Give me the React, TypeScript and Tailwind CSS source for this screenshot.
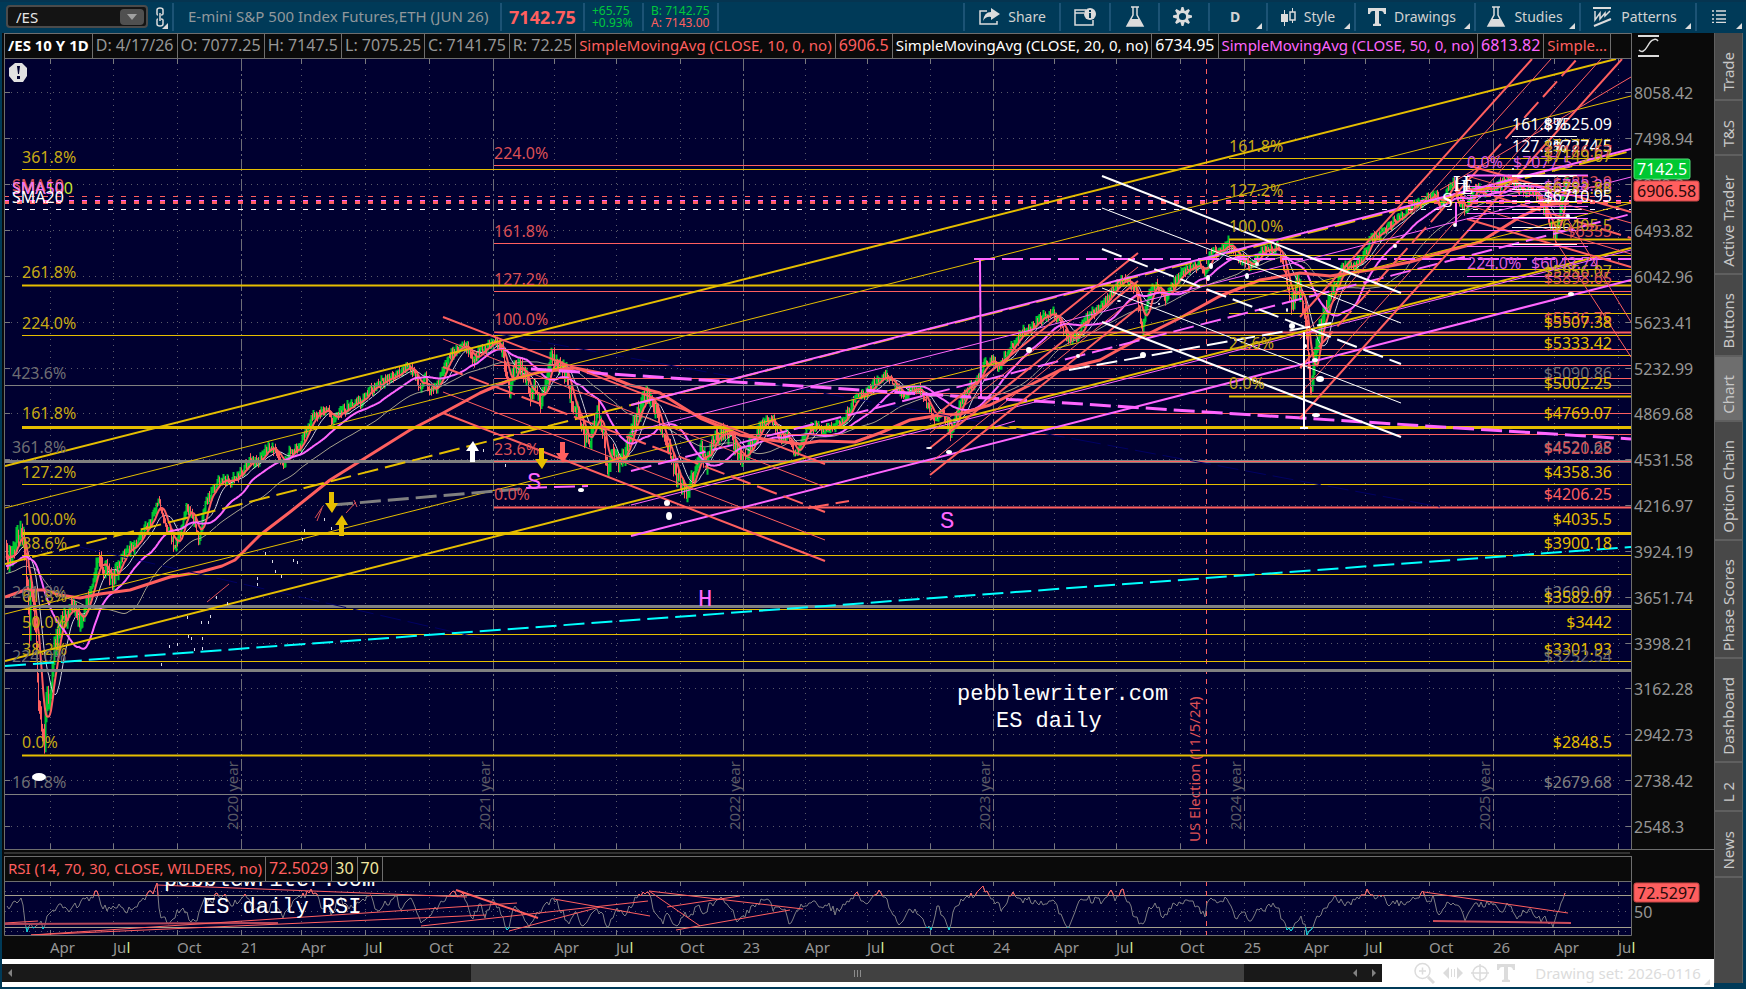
import { ReactNode } from 'react'

type Point = [number, number]
type Level = [number, number, number]
type Segment = [number, number, number, number, string, number, boolean?]
type Label = [number, number, string, string]

const YELLOW = '#e6be00'
const RED = '#ff5f5f'
const MAGENTA = '#ff66ff'
const GRAY = '#808080'
const GREEN = '#00c832'
const DIM_YELLOW = '#c8aa14'
const DIM_RED = '#dc5055'

const gridX = [50, 113, 177, 301, 365, 429, 554, 616, 680, 805, 867, 930, 1054, 1116, 1180, 1304, 1365, 1429, 1554, 1618]
const years: [number, string][] = [[241, '2020 year'], [493, '2021 year'], [743, '2022 year'], [993, '2023 year'], [1244, '2024 year'], [1493, '2025 year']]

const priceAxis: [number, string][] = [
  [92, '8058.42'], [138, '7498.94'], [184, '6978.3'], [230, '6493.82'], [276, '6042.96'], [322, '5623.41'],
  [368, '5232.99'], [413, '4869.68'], [459, '4531.58'], [505, '4216.97'], [551, '3924.19'], [597, '3651.74'],
  [643, '3398.21'], [688, '3162.28'], [734, '2942.73'], [780, '2738.42'], [826, '2548.3'],
]

const dates: [number, string][] = [
  [50, 'Apr'], [113, 'Jul'], [177, 'Oct'], [241, '21'], [301, 'Apr'], [365, 'Jul'], [429, 'Oct'], [493, '22'],
  [554, 'Apr'], [616, 'Jul'], [680, 'Oct'], [743, '23'], [805, 'Apr'], [867, 'Jul'], [930, 'Oct'], [993, '24'],
  [1054, 'Apr'], [1116, 'Jul'], [1180, 'Oct'], [1244, '25'], [1304, 'Apr'], [1365, 'Jul'], [1429, 'Oct'],
  [1493, '26'], [1554, 'Apr'], [1618, 'Jul'],
]

// Fibonacci levels: x start, y, weight (1 thin, 2 soft, 3 bold)
const yellowLevels: Level[] = [
  [22, 169, 1], [22, 285, 2], [22, 335, 1], [22, 427, 3], [22, 484, 1], [22, 533, 3], [22, 555, 1], [22, 574, 1],
  [22, 609, 1], [22, 634, 1], [22, 661, 1], [22, 755, 2],
  [1229, 158, 1], [1229, 202, 1], [1229, 239, 2], [1229, 255, 1], [1229, 269, 1], [1229, 281, 1], [1229, 294, 1],
  [1229, 313, 1], [1229, 355, 1], [1229, 396, 2],
]
const grayLevels: Level[] = [[5, 385, 1], [5, 461, 3], [5, 606, 3], [5, 670, 3], [5, 794, 1]]
const redLevels: Level[] = [
  [494, 165, 1], [494, 243, 1], [494, 291, 1], [494, 332, 2], [494, 349, 1], [494, 365, 1], [494, 378, 1],
  [494, 393, 1], [494, 413, 1], [494, 434, 1], [494, 461, 1], [494, 507, 2],
]

const channels: Segment[] = [
  [80, 547, 480, 638, '#000064', 1, true],
  [493, 333, 1080, 440, '#000064', 1, true],
  [1080, 440, 1440, 507, '#000064', 1, true],
  [5, 466, 1616, 59, YELLOW, 2],
  [5, 508, 1631, 96, YELLOW, 1],
  [5, 564, 1631, 151, YELLOW, 2, true],
  [5, 614, 1631, 203, YELLOW, 1],
  [5, 661, 1631, 248, YELLOW, 2],
  [5, 666, 1631, 547, '#00ffff', 2, true],
  [631, 405, 1631, 149, MAGENTA, 2],
  [631, 432, 1631, 177, MAGENTA, 1],
  [631, 471, 1631, 214, MAGENTA, 2, true],
  [631, 505, 1631, 250, MAGENTA, 1],
  [631, 536, 1631, 280, MAGENTA, 2],
  [531, 369, 1631, 439, MAGENTA, 3, true],
  [974, 259, 1631, 259, MAGENTA, 2, true],
  [980, 260, 981, 398, MAGENTA, 2],
  [526, 488, 588, 486, MAGENTA, 2, true],
  [995, 427, 1015, 421, MAGENTA, 1],
  [332, 505, 520, 489, GRAY, 3, true],
  [443, 317, 825, 464, RED, 2],
  [443, 339, 825, 487, RED, 1],
  [443, 367, 825, 512, RED, 2, true],
  [443, 392, 825, 540, RED, 1],
  [443, 413, 825, 561, RED, 2],
  [808, 508, 849, 501, RED, 2, true],
  [930, 420, 1138, 253, RED, 2],
  [930, 433, 1138, 267, RED, 1],
  [930, 448, 1138, 281, RED, 2],
  [930, 463, 1138, 295, RED, 1],
  [930, 475, 1138, 308, RED, 2],
  [1300, 317, 1532, 59, RED, 2],
  [1300, 339, 1551, 59, RED, 1],
  [1300, 368, 1577, 59, RED, 2, true],
  [1300, 394, 1601, 59, RED, 1],
  [1300, 418, 1622, 59, RED, 2],
  [1440, 190, 1631, 77, RED, 1],
  [1467, 165, 1631, 212, RED, 2],
  [1467, 176, 1631, 223, RED, 1],
  [1467, 188, 1631, 238, RED, 2, true],
  [1467, 205, 1631, 254, RED, 1],
  [1467, 219, 1631, 267, RED, 2],
  [1553, 237, 1631, 357, RED, 1],
  [1548, 187, 1631, 322, RED, 1],
  [1102, 176, 1401, 293, '#fff', 2],
  [1102, 208, 1401, 323, '#fff', 1],
  [1102, 249, 1401, 364, '#fff', 2, true],
  [1102, 288, 1401, 403, '#fff', 1],
  [1102, 322, 1401, 437, '#fff', 2],
  [1069, 370, 1331, 323, '#fff', 2, true],
  [1304, 332, 1304, 428, '#fff', 2],
  [1300, 428, 1308, 428, '#fff', 2],
  [207, 602, 229, 584, DIM_RED, 1],
  [315, 518, 323, 506, DIM_RED, 1],
  [317, 521, 322, 508, DIM_RED, 1],
  [346, 513, 356, 502, DIM_RED, 1],
  [354, 500, 357, 507, DIM_RED, 1],
]

const price: Point[] = [
  [-110, 590], [-60, 580], [-20, 568], [6, 553], [8, 560], [15, 540], [22, 534], [24, 545], [27, 590], [29, 630], [30, 590],
  [33, 600], [36, 650], [38, 700], [41, 725], [44, 745], [46, 705], [50, 690], [53, 660], [56, 640], [62, 618], [68, 620],
  [70, 605], [76, 612], [81, 625], [86, 600], [90, 590], [97, 560], [101, 565], [106, 570], [112, 580], [118, 565],
  [125, 553], [130, 548], [136, 546], [144, 530], [150, 522], [158, 500], [163, 520], [170, 535], [174, 548], [180, 532],
  [186, 508], [192, 515], [198, 540], [203, 515], [206, 500], [212, 490], [220, 480], [228, 481], [235, 478], [243, 470],
  [250, 460], [258, 463], [265, 450], [271, 448], [278, 455], [283, 467], [290, 450], [298, 450], [306, 430], [312, 416],
  [320, 412], [328, 409], [332, 422], [338, 415], [345, 410], [352, 404], [360, 402], [366, 392], [374, 387], [382, 382],
  [390, 377], [400, 372], [408, 367], [414, 372], [420, 390], [425, 378], [430, 393], [437, 385], [445, 365], [452, 352],
  [458, 348], [467, 347], [473, 362], [480, 350], [487, 347], [492, 339], [500, 347], [505, 365], [509, 388], [514, 370],
  [520, 365], [526, 378], [530, 400], [536, 388], [540, 410], [545, 380], [551, 357], [558, 364], [566, 375], [572, 405],
  [578, 410], [584, 440], [590, 440], [597, 410], [602, 430], [607, 472], [612, 450], [618, 463], [624, 455], [630, 435],
  [637, 412], [645, 397], [650, 396], [656, 415], [662, 435], [668, 445], [674, 470], [680, 485], [687, 492], [694, 472],
  [701, 452], [706, 465], [712, 440], [720, 435], [730, 433], [735, 450], [741, 460], [750, 445], [758, 432], [765, 420],
  [773, 422], [781, 440], [788, 435], [793, 455], [800, 445], [806, 430], [815, 427], [825, 430], [835, 425], [842, 421],
  [850, 408], [857, 394], [865, 395], [875, 382], [885, 375], [893, 382], [903, 398], [912, 388], [920, 390], [927, 405],
  [935, 420], [942, 408], [950, 434], [956, 415], [965, 392], [975, 382], [984, 364], [990, 360], [998, 366], [1010, 348],
  [1022, 333], [1034, 324], [1045, 315], [1052, 312], [1060, 324], [1068, 340], [1078, 335], [1086, 317], [1095, 312],
  [1105, 300], [1115, 287], [1126, 279], [1135, 290], [1142, 328], [1148, 295], [1156, 284], [1165, 300], [1172, 285],
  [1180, 274], [1190, 267], [1200, 264], [1205, 275], [1210, 252], [1220, 250], [1228, 243], [1236, 255], [1245, 262],
  [1252, 268], [1260, 250], [1270, 250], [1277, 245], [1284, 270], [1290, 300], [1298, 285], [1305, 320], [1310, 390],
  [1316, 345], [1320, 330], [1328, 300], [1335, 285], [1342, 268], [1352, 265], [1362, 260], [1370, 237], [1380, 234],
  [1390, 224], [1400, 217], [1412, 207], [1425, 200], [1437, 197], [1440, 208], [1448, 187], [1453, 182], [1458, 200],
  [1466, 210], [1472, 190], [1485, 190], [1500, 184], [1510, 180], [1520, 190], [1530, 190], [1540, 200], [1550, 225],
  [1555, 238], [1560, 210], [1565, 185], [1567, 174],
]

const sma200: Point[] = [
  [5, 597], [25, 590], [45, 590], [60, 595], [80, 598], [100, 594], [130, 590], [170, 577], [200, 572], [222, 566],
  [235, 560], [260, 535], [290, 512], [330, 480], [370, 455], [410, 430], [443, 413], [480, 393], [510, 380], [540, 372],
  [575, 368], [600, 373], [630, 385], [660, 393], [700, 418], [740, 435], [770, 440], [800, 444], [820, 441], [855, 442],
  [880, 433], [910, 420], [940, 415], [960, 414], [990, 405], [1020, 390], [1060, 370], [1100, 360], [1140, 338],
  [1180, 318], [1220, 296], [1260, 280], [1300, 273], [1330, 276], [1370, 270], [1410, 262], [1440, 253], [1480, 242],
  [1520, 217], [1545, 205], [1567, 203],
]

const rsi: Point[] = [
  [7, 908], [12, 902], [20, 899], [23, 905], [25, 925], [27, 935], [30, 922], [34, 932], [38, 920], [44, 928], [48, 912],
  [55, 908], [62, 904], [68, 910], [78, 905], [85, 900], [92, 896], [98, 892], [100, 908], [110, 908], [118, 905],
  [125, 911], [135, 905], [145, 898], [152, 892], [157, 886], [160, 915], [165, 920], [172, 922], [178, 911], [185, 910],
  [190, 920], [197, 922], [203, 900], [210, 903], [216, 896], [225, 897], [233, 905], [240, 900], [246, 896], [254, 912],
  [260, 905], [268, 910], [275, 900], [283, 918], [290, 905], [300, 898], [312, 891], [317, 897], [323, 910], [328, 903],
  [332, 917], [338, 898], [345, 903], [350, 907], [360, 900], [370, 896], [378, 912], [385, 904], [398, 896], [400, 912],
  [408, 899], [415, 905], [421, 925], [430, 918], [438, 905], [445, 899], [453, 890], [458, 895], [466, 897], [472, 918],
  [480, 905], [485, 916], [493, 902], [500, 912], [508, 930], [515, 905], [520, 914], [528, 925], [535, 915], [542, 910],
  [550, 902], [556, 900], [562, 912], [568, 922], [575, 913], [583, 926], [590, 915], [600, 910], [608, 926], [618, 910],
  [625, 915], [635, 900], [648, 891], [655, 912], [662, 923], [668, 912], [676, 929], [684, 912], [690, 917], [697, 905],
  [703, 914], [710, 904], [722, 900], [730, 908], [737, 919], [745, 915], [755, 905], [765, 899], [775, 910], [782, 905],
  [790, 924], [797, 910], [805, 903], [815, 901], [822, 908], [828, 904], [835, 912], [845, 903], [857, 892], [863, 903],
  [870, 902], [878, 892], [885, 897], [892, 912], [900, 925], [908, 908], [915, 912], [923, 922], [931, 929], [938, 905],
  [944, 920], [950, 928], [955, 905], [965, 897], [975, 896], [984, 888], [990, 896], [998, 905], [1003, 910], [1010, 893],
  [1018, 900], [1028, 900], [1040, 903], [1052, 900], [1060, 913], [1068, 926], [1077, 905], [1085, 898], [1093, 901],
  [1105, 900], [1110, 892], [1115, 898], [1123, 890], [1130, 908], [1137, 918], [1142, 926], [1148, 910], [1155, 903],
  [1164, 918], [1172, 905], [1180, 902], [1190, 898], [1198, 908], [1205, 915], [1209, 897], [1215, 903], [1225, 898],
  [1232, 905], [1236, 922], [1243, 910], [1250, 920], [1258, 908], [1265, 912], [1272, 903], [1278, 908], [1283, 922],
  [1290, 930], [1297, 920], [1302, 918], [1308, 934], [1315, 920], [1325, 908], [1335, 897], [1345, 905], [1355, 900],
  [1368, 891], [1375, 900], [1383, 892], [1388, 910], [1395, 902], [1405, 905], [1415, 897], [1424, 892], [1428, 903],
  [1433, 896], [1438, 920], [1445, 905], [1453, 902], [1460, 910], [1466, 922], [1472, 907], [1480, 905], [1490, 903],
  [1500, 910], [1510, 905], [1517, 918], [1530, 908], [1540, 919], [1548, 920], [1553, 928], [1558, 910], [1565, 893],
]

const rsiTrends: Segment[] = [
  [5, 923, 38, 921, RED, 1], [5, 924, 278, 923, '#b4465a', 2], [31, 935, 486, 915, RED, 1], [31, 935, 517, 903, RED, 1],
  [157, 885, 467, 897, RED, 1], [456, 890, 538, 918, RED, 2], [421, 926, 648, 901, RED, 1], [509, 931, 600, 907, RED, 1],
  [554, 899, 650, 916, RED, 1], [649, 891, 803, 909, RED, 1], [649, 891, 700, 926, RED, 1], [667, 907, 740, 896, RED, 1],
  [676, 930, 790, 910, RED, 1], [1424, 892, 1568, 913, RED, 1], [1433, 921, 1571, 923, '#c84b5a', 2],
]

const leftLabels: Label[] = [
  [22, 163, '361.8%', DIM_YELLOW], [22, 278, '261.8%', DIM_YELLOW], [22, 329, '224.0%', DIM_YELLOW],
  [22, 419, '161.8%', DIM_YELLOW], [22, 478, '127.2%', DIM_YELLOW], [22, 525, '100.0%', DIM_YELLOW],
  [22, 549, '88.6%', DIM_YELLOW], [22, 602, '61.8%', DIM_YELLOW], [22, 628, '50.0%', DIM_YELLOW],
  [22, 655, '38.2%', DIM_YELLOW], [22, 748, '0.0%', DIM_YELLOW],
  [12, 379, '423.6%', '#6e6e73'], [12, 453, '361.8%', '#6e6e73'], [12, 598, '261.8%', '#6e6e73'],
  [12, 662, '224.0%', '#6e6e73'], [12, 788, '161.8%', '#6e6e73'],
  [494, 159, '224.0%', DIM_RED], [494, 237, '161.8%', DIM_RED], [494, 285, '127.2%', DIM_RED],
  [494, 325, '100.0%', DIM_RED], [494, 455, '23.6%', DIM_RED], [494, 500, '0.0%', DIM_RED],
  [1229, 152, '161.8%', DIM_YELLOW], [1229, 196, '127.2%', DIM_YELLOW], [1229, 232, '100.0%', DIM_YELLOW],
  [1229, 349, '23.6%', DIM_YELLOW], [1229, 389, '0.0%', DIM_YELLOW],
  [1467, 168, '0.0%', '#dc5adc'], [1513, 168, '$7077.5', '#dc5adc'],
  [1467, 269, '224.0%', '#dc5adc'], [1531, 269, '$6043.74', '#dc5adc'],
  [1512, 130, '161.8%', '#fff'], [1512, 152, '127.2%', '#fff'],
  [12, 191, 'SMA10', DIM_RED], [12, 194, 'SMA100', '#c8e632'], [12, 194, 'SMA50', MAGENTA], [12, 203, 'SMA20', '#fff'],
]

const rightLabels: [number, string, string][] = [
  [130, '$7525.09', '#fff'], [151, '$7277.75', DIM_YELLOW], [152, '$7274.5', '#fff'], [157, '$7186.67', DIM_RED],
  [162, '$7149.67', DIM_YELLOW], [188, '$6853.9', DIM_RED], [191, '$6798.28', '#dc5adc'], [194, '$6782.88', DIM_YELLOW],
  [202, '$6710.95', '#fff'], [231, '$6405.5', DIM_YELLOW], [237, '$6355', DIM_RED], [277, '$5956.07', DIM_YELLOW],
  [284, '$5898.65', DIM_RED], [324, '$5536.75', DIM_RED], [328, '$5507.38', YELLOW], [349, '$5333.42', YELLOW],
  [379, '$5090.86', '#6e6e73'], [389, '$5002.25', YELLOW], [419, '$4769.07', YELLOW], [453, '$4521.68', GRAY],
  [454, '$4520.25', DIM_RED], [478, '$4358.36', YELLOW], [500, '$4206.25', RED], [525, '$4035.5', YELLOW],
  [549, '$3900.18', YELLOW], [598, '$3600.68', GRAY], [603, '$3582.07', YELLOW], [628, '$3442', YELLOW],
  [655, '$3301.93', YELLOW], [662, '$3252.54', '#6e6e73'], [748, '$2848.5', YELLOW], [788, '$2679.68', GRAY],
]

const bubbles: [number, number, number, number][] = [
  [39, 777, 7, 4], [667, 503, 3, 3], [669, 516, 3, 4], [581, 490, 3, 2], [929, 448, 3, 1], [949, 452, 3, 2],
  [1029, 350, 3, 3], [1119, 301, 2, 1], [1143, 355, 3, 3], [1078, 356, 2, 2], [1208, 278, 2, 3], [1211, 266, 2, 3],
  [1247, 276, 2, 3], [1257, 264, 2, 2], [1287, 310, 1, 2], [1292, 326, 3, 3], [1315, 360, 3, 2], [1320, 379, 4, 3],
  [1316, 415, 4, 2], [1305, 346, 2, 2], [1395, 246, 2, 2], [1455, 225, 2, 2], [1568, 216, 2, 2], [1571, 294, 3, 2],
  [1513, 169, 1, 1], [1159, 304, 1, 1],
]

const ticks: Point[] = [
  [161, 663], [169, 645], [177, 643], [187, 616], [188, 635], [191, 637], [194, 648], [201, 621], [202, 637], [202, 647],
  [208, 621], [210, 615], [216, 596], [227, 602], [257, 577], [257, 583], [265, 552], [272, 560], [275, 570], [281, 575],
  [293, 559], [297, 561], [302, 538], [304, 529], [324, 518], [331, 527], [483, 449], [505, 464],
]

// stable noise so the bars look the same on every render
const noise = (n: number) => {
  const v = Math.sin(n * 127.1 + 11.7) * 43758.5453
  return v - Math.floor(v)
}

const sample = (points: Point[], x: number) => {
  const i = points.findIndex(p => p[0] >= x)
  if (i <= 0) return points[i < 0 ? points.length - 1 : 0][1]
  const [x0, y0] = points[i - 1]
  const [x1, y1] = points[i]
  return y0 + ((y1 - y0) * (x - x0)) / (x1 - x0)
}

// selloffs have wider daily ranges than rallies
const swing = (x: number) => {
  if (x < 60 || (x > 1290 && x < 1330)) return 16
  if (x < 120 || (x > 500 && x < 760)) return 12
  return 7
}

const FIRST = -110
const LAST = 1567
const closes: number[] = []
for (let x = FIRST; x <= LAST; x++) closes.push(sample(price, x) + (noise(x) - 0.5) * swing(x))

const sma = (length: number) => {
  let d = ''
  for (let x = 6; x <= LAST; x++) {
    const end = x - FIRST + 1
    const part = closes.slice(end - length, end)
    const avg = part.reduce((a, b) => a + b, 0) / length
    d += `${d ? 'L' : 'M'}${x} ${avg.toFixed(1)}`
  }
  return d
}

const bars = (up: boolean) => {
  let d = ''
  for (let x = 6; x <= LAST; x++) {
    const close = closes[x - FIRST]
    const open = closes[x - FIRST - 1]
    // screen y grows downwards, so a smaller value is a higher price
    if (close < open !== up) continue
    const top = Math.min(open, close) - noise(x + 500) * swing(x) * 0.7
    const bottom = Math.max(open, close) + noise(x + 900) * swing(x) * 0.7
    d += `M${x}.5 ${top.toFixed(1)}V${bottom.toFixed(1)}`
  }
  return d
}

const toPath = (points: Point[]) => 'M' + points.map(p => p.join(' ')).join('L')

const rsiPoints: Point[] = []
for (let x = 7; x <= 1565; x += 2) rsiPoints.push([x, Math.round(sample(rsi, x) + (noise(x + 40) - 0.5) * 7)])

const Levels = ({ levels, color }: { levels: Level[], color: string }) => (
  <g shapeRendering="crispEdges">
    {levels.map(([x, y, weight]) => (
      <g key={`${x}-${y}`}>
        {weight > 1 && <rect x={x} y={y - 1} width={1631 - x} height={3} fill={color} opacity={weight === 2 ? 0.5 : 1} />}
        <rect x={x} y={y} width={1631 - x} height={1} fill={color} />
      </g>
    ))}
  </g>
)

const Segments = ({ items }: { items: Segment[] }) => (
  <>
    {items.map(([x1, y1, x2, y2, color, width, dashed], i) => (
      <line key={i} x1={x1} y1={y1} x2={x2} y2={y2} stroke={color} strokeWidth={width} strokeDasharray={dashed ? '21 7' : undefined} />
    ))}
  </>
)

const Arrow = ({ x, y, color, down }: { x: number, y: number, color: string, down?: boolean }) => (
  <path
    d={down
      ? `M${x - 2} ${y}h5v11h4l-6 10l-7 -10h4z`
      : `M${x - 2} ${y + 21}h5v-11h4l-6 -10l-7 10h4z`}
    fill={color}
  />
)

const PriceChart = () => (
  <svg className="h-full w-full" viewBox="4 59 1710 790" preserveAspectRatio="none" fontFamily="'Noto Sans', sans-serif" fontSize={16}>
    <defs>
      <clipPath id="plot"><rect x={5} y={59} width={1626} height={790} /></clipPath>
    </defs>
    <rect x={4} y={59} width={1628} height={790} fill="#000030" />
    <g clipPath="url(#plot)">
      <g stroke="#5a5a69" shapeRendering="crispEdges">
        {gridX.map(x => <line key={x} x1={x + 0.5} x2={x + 0.5} y1={69} y2={849} strokeDasharray="1 5" />)}
        {priceAxis.map(([y]) => <line key={y} x1={5} x2={1631} y1={y + 0.5} y2={y + 0.5} strokeDasharray="1 5" />)}
        {priceAxis.map(([y]) => <path key={y} d={`M5 ${y}.5h5M1626 ${y}.5h5`} stroke="#78787d" />)}
        {gridX.map(x => <path key={x} d={`M${x}.5 59v5M${x}.5 844v5`} stroke="#78787d" />)}
        {years.map(([x]) => <line key={x} x1={x + 0.5} x2={x + 0.5} y1={59} y2={849} strokeDasharray="12 3 2 3" stroke="#6e6e78" />)}
      </g>
      <line x1={1206.5} x2={1206.5} y1={59} y2={849} stroke={RED} strokeDasharray="5 5" shapeRendering="crispEdges" />

      <g fontSize={15}>
        {years.map(([x, text]) => (
          <text key={text} transform={`translate(${x - 3} 830) rotate(-90)`} fill="#5a5a64">{text}</text>
        ))}
        <text transform="translate(1200 842) rotate(-90)" fill={DIM_RED}>US Election (11/5/24)</text>
      </g>

      <g fill="none">
        <path d={bars(true)} stroke={GREEN} strokeWidth={2} />
        <path d={sma(100)} stroke="#a5a08c" />
        <path d={sma(20)} stroke="#d2d2dc" />
        <path d={sma(10)} stroke={RED} strokeWidth={2} />
        <path d={bars(false)} stroke={RED} strokeWidth={1} />
        <path d={sma(50)} stroke={MAGENTA} strokeWidth={2} />
        <path d={toPath(sma200)} stroke={RED} strokeWidth={3} strokeLinejoin="round" />
      </g>

      <Levels levels={grayLevels} color={GRAY} />
      <Levels levels={yellowLevels} color={YELLOW} />
      <Levels levels={redLevels} color={RED} />

      <g strokeDasharray="5 8" shapeRendering="crispEdges">
        <line x1={4} x2={1631} y1={196.5} y2={196.5} stroke={RED} />
        <line x1={4} x2={1631} y1={202.5} y2={202.5} stroke={RED} strokeWidth={3} />
        <line x1={4} x2={1631} y1={200.5} y2={200.5} stroke={MAGENTA} />
        <line x1={4} x2={1631} y1={209.5} y2={209.5} stroke="#fff" />
      </g>

      <Segments items={channels} />

      <g shapeRendering="crispEdges">
        {[175, 186, 191, 195, 201, 206, 213, 218, 230, 246, 276].map(y => (
          <rect key={y} x={1467} y={y} width={121} height={1} fill={MAGENTA} />
        ))}
        <rect x={1467} y={174} width={121} height={3} fill={MAGENTA} opacity={0.5} />
        {[136, 175, 183, 189, 201, 209, 217, 227, 244].map(y => (
          <rect key={y} x={1512} y={y} width={65} height={y === 175 ? 2 : 1} fill="#fff" />
        ))}
        <rect x={1455} y={202} width={2} height={22} fill={MAGENTA} />
        {ticks.map(([x, y]) => <rect key={`${x}-${y}`} x={x} y={y} width={1} height={3} fill="#dcdce6" />)}
      </g>

      {leftLabels.map(([x, y, text, color], i) => <text key={i} x={x} y={y} fill={color}>{text}</text>)}
      <g textAnchor="end">
        {rightLabels.map(([y, text, color]) => <text key={text} x={1612} y={y} fill={color}>{text}</text>)}
      </g>

      {bubbles.map(([x, y, rx, ry]) => <ellipse key={`${x}-${y}`} cx={x} cy={y} rx={rx} ry={ry} fill="#fff" />)}

      <g fontFamily="'Liberation Mono', monospace" fontSize={24} fill={MAGENTA}>
        <text x={527} y={489}>S</text>
        <text x={940} y={528}>S</text>
        <text x={698} y={606}>H</text>
        <g fill="#fff" fontSize={22}>
          <text x={957} y={700}>pebblewriter.com</text>
          <text x={996} y={727}>ES daily</text>
        </g>
      </g>
      <g fontFamily="'Liberation Serif', serif" fill="#fff" fontSize={24}>
        <text x={1453} y={191}>H</text>
        <text x={1461} y={194} fontSize={20}>E</text>
        <text x={1442} y={207} fontSize={20}>S</text>
      </g>

      <Arrow x={472} y={441} color="#fff" />
      <Arrow x={331} y={492} color={YELLOW} down />
      <Arrow x={341} y={515} color={YELLOW} />
      <Arrow x={541} y={448} color={YELLOW} down />
      <Arrow x={562} y={442} color={RED} down />

      <path d="M15 63h7l5 5v8l-4 6h-9l-5-6v-8z" fill="#e1e1e1" />
      <path d="M17 66h3l-1 8h-1z M17 76h3v3h-3z" fill="#000030" />
    </g>
    <path d="M4.5 59V849M1631.5 59V849" stroke="#6e6e6e" />

    <g fill="#969696">
      {priceAxis.map(([y, text]) => <text key={y} x={1634} y={y + 7}>{text}</text>)}
    </g>
    <rect x={1634} y={159} width={56} height={20} rx={2} fill="#00c832" stroke="#50dc78" />
    <text x={1637} y={175} fill="#fff">7142.5</text>
    <rect x={1634} y={181} width={65} height={20} rx={2} fill={RED} stroke="#c84646" />
    <text x={1637} y={197} fill="#280a0a">6906.58</text>
  </svg>
)

const RsiChart = () => (
  <svg className="h-full w-full" viewBox="4 881 1710 78" preserveAspectRatio="none" fontFamily="'Noto Sans', sans-serif" fontSize={16}>
    <defs>
      <clipPath id="rsi-plot"><rect x={5} y={882} width={1626} height={53} /></clipPath>
      <clipPath id="overbought"><rect x={5} y={882} width={1626} height={14} /></clipPath>
      <clipPath id="oversold"><rect x={5} y={927} width={1626} height={8} /></clipPath>
    </defs>
    <rect x={4} y={881} width={1628} height={54} fill="#000030" />
    <g clipPath="url(#rsi-plot)">
      <g stroke="#5a5a69" shapeRendering="crispEdges">
        {dates.map(([x]) => <line key={x} x1={x + 0.5} x2={x + 0.5} y1={891} y2={930} strokeDasharray="1 5" />)}
        {[891, 911, 931].map(y => <line key={y} x1={5} x2={1631} y1={y + 0.5} y2={y + 0.5} strokeDasharray="1 5" />)}
        {dates.map(([x]) => <path key={x} d={`M${x}.5 881v5M${x}.5 930v5`} stroke="#78787d" />)}
      </g>
      <path d="M5 895.5H1631M5 927.5H1631" stroke="#a5a08c" shapeRendering="crispEdges" />
      <line x1={1206.5} x2={1206.5} y1={881} y2={935} stroke={RED} strokeDasharray="5 5" />
      <g fill="none">
        <path d={toPath(rsiPoints)} stroke="#7d7d82" />
        <path d={toPath(rsiPoints)} stroke={RED} clipPath="url(#overbought)" />
        <path d={toPath(rsiPoints)} stroke="#00d2dc" clipPath="url(#oversold)" />
      </g>
      <Segments items={rsiTrends} />
      <g fontFamily="'Liberation Mono', monospace" fontSize={22} fill="#fff">
        <text x={164} y={886}>pebblewriter.com</text>
        <text x={203} y={913}>ES daily RSI</text>
      </g>
    </g>
    <path d="M4.5 881V935.5H1631.5V881M4 881.5H1632" fill="none" stroke="#6e6e6e" />
    <g fill="#969696">
      {dates.map(([x, text]) => (
        <text key={x} x={x} y={953} fontSize={15}>
          {text === 'Jul' ? <>Ju<tspan fill="#dcf096">l</tspan></> : text}
        </text>
      ))}
      <text x={1634} y={918}>50</text>
    </g>
    <rect x={1634} y={883} width={65} height={19} rx={2} fill={RED} stroke="#c84646" />
    <text x={1637} y={899} fill="#280a0a">72.5297</text>
  </svg>
)

const Corner = () => (
  <svg className="absolute right-1 bottom-0.5 h-1.5 w-1.5" viewBox="0 0 6 6"><path d="M6 0V6H0z" fill="#dcdcdc" /></svg>
)

const ToolButton = ({ className, label, corner, children }: {
  className: string,
  label: string,
  corner?: boolean,
  children: ReactNode
}) => (
  <button
    aria-label={label}
    className={`relative flex h-7 shrink-0 items-center justify-center gap-2 border-l-2 border-[#1c5375] text-sm text-[#d2d2d2] ${corner ? 'pr-1.5' : ''} ${className}`}
  >
    {children}
    {corner && <Corner />}
  </button>
)

const FlaskIcon = () => (
  <svg width="20" height="22" viewBox="0 0 20 22">
    <path d="M6 1h8M8 1v8L2 20h16L12 9V1" fill="none" stroke="#dcdcdc" strokeWidth="1.5" />
    <path d="M6 13h8l4 7H2z" fill="#dcdcdc" />
  </svg>
)

const BigT = ({ color }: { color: string }) => (
  <svg width="18" height="18" viewBox="0 0 18 18">
    <path d="M0 0h18v6h-2q-.5-3-3-3h-2v12q0 1 2 1v2H5v-2q2 0 2-1V3H5Q2.500 3 2 6H0z" fill={color} />
  </svg>
)

const Toolbar = () => (
  <header className="flex h-[33px] shrink-0 items-center border-t-2 border-[#053450] bg-[#003a58] pb-0.5">
    <div className="ml-1.5 flex h-[23px] w-[142px] shrink-0 items-center rounded-sm border-2 border-[#4b4b4b] bg-[#141414]">
      <input aria-label="Symbol" defaultValue="/ES" className="w-full min-w-0 bg-transparent pl-2 text-[15px] leading-none text-[#e6e6e6] outline-none" />
      <button aria-label="Symbol list" className="mr-0.5 flex h-4 w-6 shrink-0 items-center justify-center rounded-sm bg-[#505050]">
        <svg width="10" height="6" viewBox="0 0 10 6"><path d="M0 0h10L5 6z" fill="#a0a0a0" /></svg>
      </button>
    </div>
    <button aria-label="Link" className="relative flex h-7 w-[24px] shrink-0 items-center justify-center">
      <svg width="10" height="20" viewBox="0 0 10 20" fill="none" stroke="#dcdcdc" strokeWidth="1.500">
        <path d="M2 7V3q0-2 3-2t3 2v4q0 1-2 1M2 13v4q0 2 3 2t3-2v-4q0-1-2-1M5 6v8M2 7q0 1 1 1M2 13q0-1 1-1" />
      </svg>
      <Corner />
    </button>
    <div className="flex h-7 w-[328px] shrink-0 items-center border-l-2 border-[#1c5375] pl-[14px] text-[15px] whitespace-nowrap text-[#91989c]">
      E-mini S&amp;P 500 Index Futures,ETH (JUN 26)
    </div>
    <div className="flex h-7 w-[83px] shrink-0 items-center justify-center border-l-2 border-[#1c5375] text-lg font-bold text-[#ff5f5f]">7142.75</div>
    <div className="flex h-7 w-[59px] shrink-0 flex-col justify-center border-l-2 border-[#1c5375] pl-[7px] text-xs leading-3 text-[#00c83c]">
      <span>+65.75</span>
      <span>+0.93%</span>
    </div>
    <div className="flex h-7 w-[77px] shrink-0 flex-col justify-center border-x-2 border-[#1c5375] pl-[7px] text-xs leading-3 text-[#ff5f5f]">
      <span className="text-[#00c83c]">B: 7142.75</span>
      <span>A: 7143.00</span>
    </div>
    <div className="flex-1" />
    <ToolButton label="Share" className="w-[96px]">
      <svg width="22" height="18" viewBox="0 0 22 18">
        <path d="M9 3H2v13h17v-3" fill="none" stroke="#dcdcdc" strokeWidth="1.500" />
        <path d="M13 0l9 6-9 6V9Q8 8 5 13 6 4 13 4z" fill="#dcdcdc" />
      </svg>
      Share
    </ToolButton>
    <ToolButton label="Chart info" className="w-[50px]">
      <svg width="22" height="18" viewBox="0 0 22 18">
        <path d="M12 2H1v15h18v-5M1 5h9" fill="none" stroke="#dcdcdc" strokeWidth="1.500" />
        <circle cx="16" cy="6" r="6" fill="#dcdcdc" />
        <path d="M15 2h2v2h-2zM15 5h2v5h-2z" fill="#003a58" />
      </svg>
    </ToolButton>
    <ToolButton label="Lab" className="w-[49px]"><FlaskIcon /></ToolButton>
    <ToolButton label="Settings" className="w-[50px] pr-1">
      <svg width="19" height="19" viewBox="-10 -10 20 20">
        {[0, 45, 90, 135, 180, 225, 270, 315].map(a => <path key={a} d="M-2.500 -5L-1 -10H1L2.500 -5z" transform={`rotate(${a})`} fill="#dcdcdc" />)}
        <circle r="5" fill="none" stroke="#dcdcdc" strokeWidth="2.500" />
      </svg>
    </ToolButton>
    <ToolButton label="Aggregation" corner className="w-[58px] font-bold">D</ToolButton>
    <ToolButton label="Style" corner className="w-[88px]">
      <svg width="15" height="18" viewBox="0 0 15 18">
        <path d="M3.500 2v16M11.500 0v15" stroke="#dcdcdc" />
        <rect x="0" y="6" width="7" height="8" fill="#dcdcdc" />
        <rect x="9" y="4" width="5" height="8" fill="#003a58" stroke="#dcdcdc" strokeWidth="1.500" />
      </svg>
      Style
    </ToolButton>
    <ToolButton label="Drawings" corner className="w-[120px]"><BigT color="#dcdcdc" />Drawings</ToolButton>
    <ToolButton label="Studies" corner className="w-[105px]"><FlaskIcon />Studies</ToolButton>
    <ToolButton label="Patterns" corner className="w-[116px]">
      <svg width="20" height="20" viewBox="0 0 20 20" fill="none" stroke="#dcdcdc">
        <path d="M0 1h18M1 19l17-7" strokeWidth="2" />
        <path d="M2 4v9l5-7v6l5-6v3l5-5" strokeWidth="1.500" />
      </svg>
      Patterns
    </ToolButton>
    <ToolButton label="Menu" corner className="w-[51px]">
      <svg width="14" height="13" viewBox="0 0 14 13"><path d="M0 1h2M4 1h10M0 5h2M4 5h10M0 9h2M4 9h10M0 12.500h2M4 12.500h10" stroke="#dcdcdc" strokeWidth="1.500" /></svg>
    </ToolButton>
  </header>
)

const Cell = ({ color, children }: { color: string, children: ReactNode }) => (
  <span className={`flex shrink-0 items-center border-r border-[#6e6e6e] px-[3px] pb-0.5 whitespace-nowrap ${color}`}>{children}</span>
)

const StudyRow = () => (
  <div className="flex h-[26px] shrink-0 bg-[#0a0a0a] text-base">
    <div className="flex min-w-0 flex-1 overflow-hidden border border-[#6e6e6e]">
      <Cell color="text-[15px] font-bold text-white">/ES 10 Y 1D</Cell>
      <Cell color="text-[#969696]">D: 4/17/26</Cell>
      <Cell color="text-[#969696]">O: 7077.25</Cell>
      <Cell color="text-[#969696]">H: 7147.5</Cell>
      <Cell color="text-[#969696]">L: 7075.25</Cell>
      <Cell color="text-[#969696]">C: 7141.75</Cell>
      <Cell color="text-[#969696]">R: 72.25</Cell>
      <Cell color="text-[15px] text-[#ff5f5f]">SimpleMovingAvg (CLOSE, 10, 0, no)</Cell>
      <Cell color="text-[#ff5f5f]">6906.5</Cell>
      <Cell color="text-[15px] text-white">SimpleMovingAvg (CLOSE, 20, 0, no)</Cell>
      <Cell color="text-white">6734.95</Cell>
      <Cell color="text-[15px] text-[#ff66ff]">SimpleMovingAvg (CLOSE, 50, 0, no)</Cell>
      <Cell color="text-[#ff66ff]">6813.82</Cell>
      <Cell color="text-[15px] text-[#ff5f5f]">Simple...</Cell>
    </div>
    <button aria-label="Scale" className="w-[82px] shrink-0 pl-1.5">
      <svg width="22" height="22" viewBox="0 0 22 22" fill="none" stroke="#dcdcdc">
        <path d="M0 1h21M0 21h21" strokeWidth="2" />
        <path d="M1 15q4 4 8-3t6-7q3-2 5 1" strokeWidth="1.500" />
      </svg>
    </button>
  </div>
)

const tabs: [string, string][] = [
  ['Trade', 'h-[68px]'], ['T&S', 'h-[55px]'], ['Active Trader', 'h-[119px]'], ['Buttons', 'h-[82px]'],
  ['Chart', 'h-[65px]'], ['Option Chain', 'h-[119px]'], ['Phase Scores', 'h-[118px]'], ['Dashboard', 'h-[104px]'],
  ['L 2', 'h-[49px]'], ['News', 'h-[66px]'],
]

const SideTabs = () => (
  <nav className="mb-1 flex w-[29px] shrink-0 flex-col border-x border-[#5f5f5f] bg-[#484848]">
    {tabs.map(([name, height]) => (
      <button
        key={name}
        className={`flex shrink-0 items-center justify-center border-b-2 border-[#5f5f5f] pt-3 text-[15px] text-[#c8c8c8] ${height} ${name === 'Chart' ? 'bg-[#6e6e6e]' : 'bg-[#484848]'}`}
      >
        <span className="rotate-180 whitespace-nowrap [writing-mode:vertical-rl]">{name}</span>
      </button>
    ))}
  </nav>
)

const BottomBar = () => (
  <div className="flex h-7 shrink-0 items-center bg-white">
    <div className="flex h-[18px] flex-1 bg-[#191919]">
      <div className="flex w-[34%] items-center pl-1.5">
        <svg width="4" height="8" viewBox="0 0 4 8"><path d="M4 0v8L0 4z" fill="#828282" /></svg>
      </div>
      <div className="flex w-[56%] items-center justify-center gap-0.5 bg-[#414141]">
        <i className="h-[7px] w-px bg-[#8c8c8c]" />
        <i className="h-[7px] w-px bg-[#8c8c8c]" />
        <i className="h-[7px] w-px bg-[#8c8c8c]" />
      </div>
      <div className="flex flex-1 items-center justify-end gap-[15px] pr-1.5">
        <svg width="4" height="8" viewBox="0 0 4 8"><path d="M4 0v8L0 4z" fill="#828282" /></svg>
        <svg width="4" height="8" viewBox="0 0 4 8"><path d="M0 0v8l4-4z" fill="#828282" /></svg>
      </div>
    </div>
    <div className="relative flex h-full w-[332px] shrink-0 items-center justify-between pr-[13px] pl-8 text-[15px] text-[#dcdcdc]">
      <button aria-label="Zoom in">
        <svg width="21" height="22" viewBox="0 0 21 22" fill="none" stroke="#dcdcdc" strokeWidth="1.500">
          <circle cx="8.500" cy="9" r="7.500" /><path d="M5 9h7M8.500 5.500v7" /><path d="M14 15l6 6" strokeWidth="3" />
        </svg>
      </button>
      <button aria-label="Pan">
        <svg width="20" height="12" viewBox="0 0 20 12"><path d="M6 0v12L0 6zM14 0v12l6-6z" fill="#dcdcdc" /><path d="M8.500 2v8M11.500 2v8" stroke="#dcdcdc" /></svg>
      </button>
      <button aria-label="Crosshair">
        <svg width="18" height="18" viewBox="0 0 18 18" fill="none" stroke="#dcdcdc" strokeWidth="1.500"><circle cx="9" cy="9" r="7" /><path d="M9 0v18M0 9h18" /></svg>
      </button>
      <button aria-label="Text"><BigT color="#dcdcdc" /></button>
      <span className="ml-3 whitespace-nowrap">Drawing set: 2026-0116</span>
      <Corner />
    </div>
  </div>
)

export const App = () => (
  <div className="flex h-screen flex-col overflow-hidden bg-[#003a58] font-['Noto_Sans',sans-serif]">
    <Toolbar />
    <div className="flex min-h-0 flex-1 pr-[3px] pb-0.5 pl-0.5">
      <main className="flex min-w-0 flex-1 flex-col bg-[#0a0a0a]">
        <div className="flex min-h-0 flex-1 flex-col pl-0.5">
          <StudyRow />
          <div className="min-h-0 flex-1">
            <PriceChart />
          </div>
          <div className="flex h-[7px] shrink-0 items-center border-t border-[#6e6e6e] pr-[84px]">
            <div className="h-0.5 flex-1 bg-[#323232]" />
          </div>
          <div className="mr-[82px] flex h-[25px] shrink-0 border border-b-0 border-[#6e6e6e] text-base">
            <Cell color="text-[15px] text-[#ff5f5f]">RSI (14, 70, 30, CLOSE, WILDERS, no)</Cell>
            <Cell color="text-[#ff5f5f]">72.5029</Cell>
            <Cell color="text-[#f0e6a0]">30</Cell>
            <Cell color="text-[#f0e6a0]">70</Cell>
          </div>
          <div className="h-[78px] shrink-0">
            <RsiChart />
          </div>
        </div>
        <BottomBar />
      </main>
      <SideTabs />
    </div>
  </div>
)

export default App
